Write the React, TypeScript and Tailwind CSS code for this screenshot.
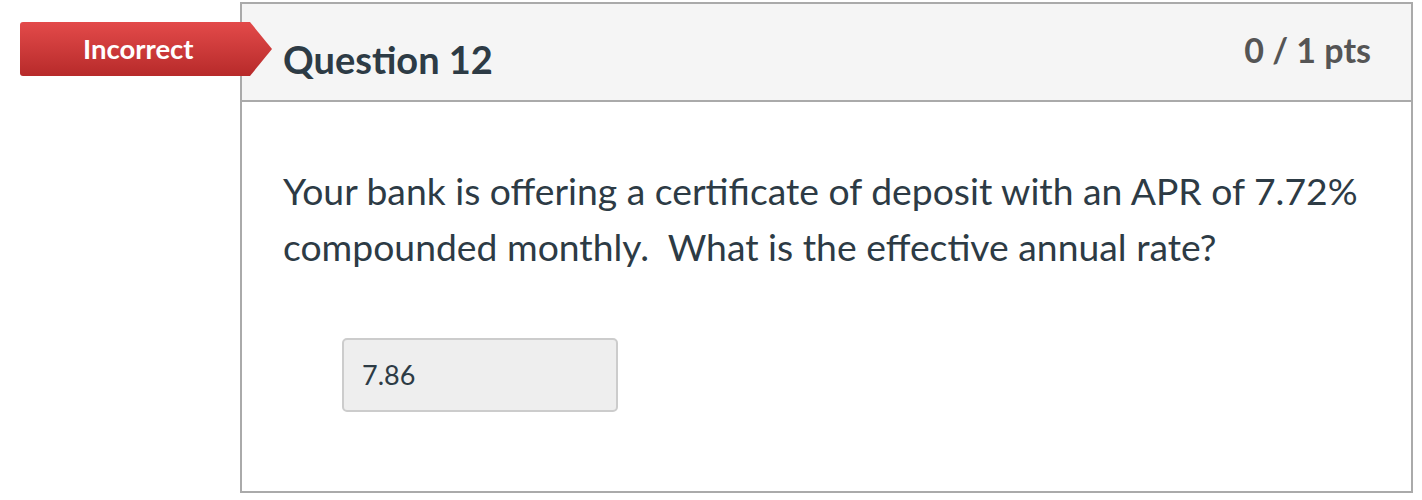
export default function App() {
  return (
    <div className="w-[1422px] h-[500px] bg-white relative" style={{ fontFamily: "Lato, 'Open Sans', sans-serif" }}>
      <div className="pt-[2px] pl-[240px]">
        <div className="w-[1173px] h-[491px] border-2 border-[#aaaaaa] flex flex-col">
          <div className="h-[98px] bg-[#f5f5f5] border-b-2 border-[#aaaaaa] flex justify-between items-start">
            <h2 className="pl-[41px] pt-[33px] text-[38px] font-bold text-[#2d3b45] leading-[1.2]">Question 12</h2>
            <div className="pr-[40px] pt-[26px] text-[34px] font-bold text-[#555555] leading-[1.2]">0 / 1 pts</div>
          </div>
          <div className="px-[41px] pt-[61px]">
            <p className="text-[37.3px] leading-[56px] text-[#2d3b45]">
              Your bank is offering a certificate of deposit with an APR of 7.72% compounded monthly.&nbsp; What is the effective annual rate?
            </p>
            <div className="mt-[63px] ml-[59px] w-[276px] h-[74px] bg-[#eeeeee] border-2 border-[#cccccc] rounded-[5px] flex items-center pl-[18px] text-[27px] text-[#2d3b45]">
              7.86
            </div>
          </div>
        </div>
      </div>
      <div className="absolute left-[20px] top-[22px] w-[252px] h-[54px] rounded-l-[3px] bg-gradient-to-b from-[#e34a4a] to-[#b72a2a] [clip-path:polygon(0_0,calc(100%-22px)_0,100%_50%,calc(100%-22px)_100%,0_100%)] flex items-center pl-[63px] text-[27.5px] font-bold text-white">
        Incorrect
      </div>
    </div>
  );
}
